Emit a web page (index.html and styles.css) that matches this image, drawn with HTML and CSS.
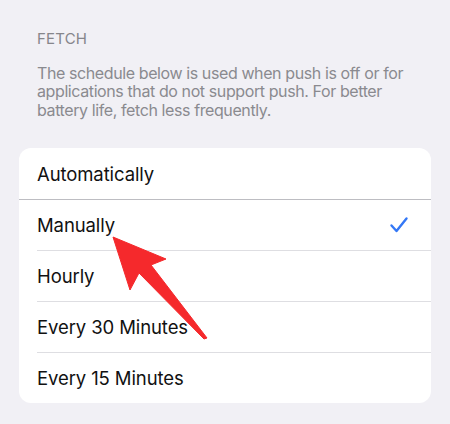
FILE: index.html
```html
<!DOCTYPE html>
<html>
<head>
<meta charset="utf-8">
<link rel="stylesheet" href="styles.css">
</head>
<body>
<div class="page">
  <div class="section-title">FETCH</div>
  <p class="section-desc">The schedule below is used when push is off or for applications that do not support push. For better battery life, fetch less frequently.</p>
  <div class="card">
    <div class="row row-first"><span class="label">Automatically</span></div>
    <div class="row"><span class="label">Manually</span>
      <svg class="check" width="20" height="20" viewBox="0 0 20 20"><path d="M2.5 10.5 L7.5 16 L17.5 3.5" fill="none" stroke="#3478f6" stroke-width="2.4" stroke-linecap="round" stroke-linejoin="round"/></svg>
    </div>
    <div class="row"><span class="label">Hourly</span></div>
    <div class="row"><span class="label">Every 30 Minutes</span></div>
    <div class="row row-last"><span class="label">Every 15 Minutes</span></div>
  </div>
</div>
<svg class="arrow" width="450" height="424" viewBox="0 0 450 424">
  <path d="M113 237 L166 259 L151 265 L207 338 L204 339 L139 273 L130 290 Z" fill="#f5292c" stroke="#f5292c" stroke-width="1" stroke-linejoin="round"/>
</svg>
</body>
</html>
```
FILE: styles.css
```css
html, body {
  margin: 0;
  padding: 0;
  background: #f1f0f5;
}
body {
  font-family: Inter, "Noto Sans", sans-serif;
  width: 450px;
  height: 424px;
  overflow: hidden;
  position: relative;
}
.page {
  padding: 30px 19px 0 19px;
}
.section-title {
  font-size: 15px;
  line-height: 18px;
  color: #86868b;
  padding-left: 18px;
  letter-spacing: 0.2px;
}
.section-desc {
  margin: 16px 0 0 0;
  padding: 0 18px;
  font-size: 16px;
  line-height: 18.4px;
  color: #8a8a8f;
  letter-spacing: -0.4px;
}
.card {
  margin-top: 29px;
  background: #ffffff;
  border-radius: 12px;
  overflow: hidden;
}
.row {
  height: 51px;
  display: flex;
  align-items: center;
  justify-content: space-between;
  padding: 0 22px 0 18px;
  position: relative;
}
.row + .row::before {
  content: "";
  position: absolute;
  top: 0;
  left: 18px;
  right: 0;
  height: 1px;
  background: #dedee2;
}
.row-first + .row::before {
  left: 0;
  background: #bdbdc2;
}
.label {
  font-size: 18.5px;
  color: #111111;
  letter-spacing: -0.1px;
}
.check {
  display: block;
}
.arrow {
  position: absolute;
  left: 0;
  top: 0;
  pointer-events: none;
}
```
